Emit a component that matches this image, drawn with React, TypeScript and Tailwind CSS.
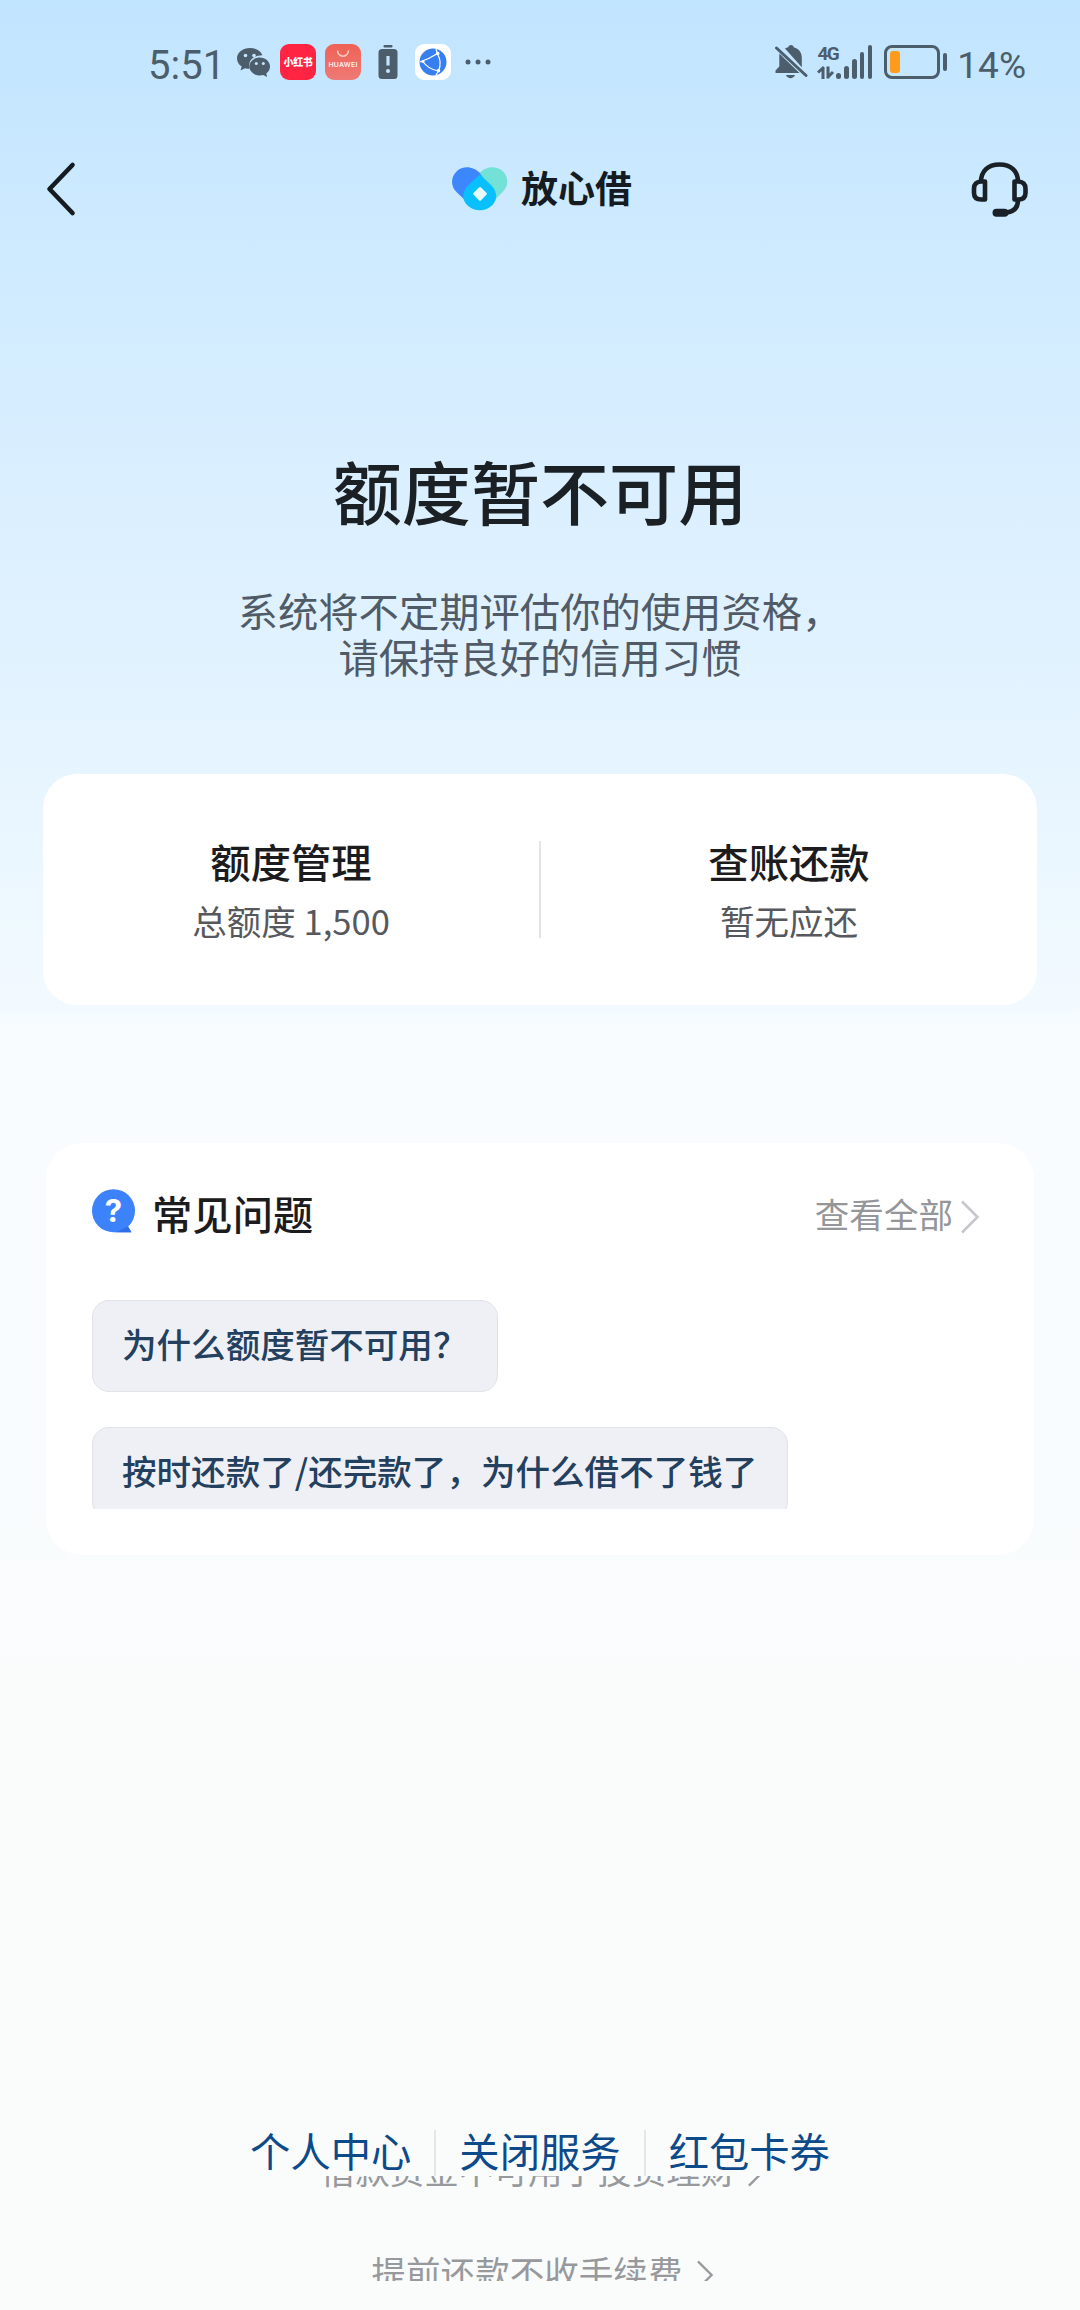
import type { ReactNode } from 'react'

const questions = [
  { id: 1, text: '为什么额度暂不可用？' },
  { id: 2, text: '按时还款了/还完款了，为什么借不了钱了' },
]

const links = ['个人中心', '关闭服务', '红包卡券']

function StatusBar() {
  return (
    <div className="flex h-[124px] items-start justify-between pl-[148px] pr-[54px] pt-[40px] text-[#4c5d6b]">
      <div className="flex h-[44px] items-center">
        <span className="w-[89px] pt-[7px] font-[Roboto] text-[40px] leading-[44px]">5:51</span>

        <svg width="34" height="34" viewBox="0 0 34 34" fill="currentColor">
          <path d="M13 3C5.800 3 0 7.600 0 13.500c0 3.300 1.800 6.100 4.700 8l-1.200 4 4.500-2.300c1.600.4 3.300.7 4.700.6-2.400-8 4-13.700 12.700-13.600C24 6 19 3 13 3z" />
          <path d="M33 21.500c0-5-4.600-8.900-10.300-8.900s-10.300 4-10.300 8.900 4.600 8.900 10.300 8.900c1.300 0 2.500-.2 3.600-.5l3.900 2-.9-3.400c2.300-1.700 3.700-4.200 3.700-7z" />
          <circle cx="8.500" cy="10.500" r="1.800" fill="#c4e5ff" />
          <circle cx="17" cy="10.500" r="1.800" fill="#c4e5ff" />
          <circle cx="19.300" cy="18.500" r="1.500" fill="#c4e5ff" />
          <circle cx="26.300" cy="18.500" r="1.500" fill="#c4e5ff" />
        </svg>

        <div className="ml-[9px] flex h-[36px] w-[36px] items-center justify-center rounded-[9px] bg-[#fe2442]">
          <span className="whitespace-nowrap text-[10px] font-black leading-none tracking-[-0.3px] text-white">小红书</span>
        </div>

        <div className="ml-[9px] flex h-[36px] w-[36px] flex-col items-center rounded-[9px] bg-linear-to-b from-[#ef6155] to-[#ee7a76]">
          <svg className="mt-[6px]" width="14" height="8" viewBox="0 0 14 8" fill="none" stroke="#fbcfc8" strokeWidth="1.500">
            <path d="M1.500 0.500a5.500 5.800 0 0 0 11 0" />
          </svg>
          <span className="mt-[3px] font-[Inter] text-[6.8px] font-semibold leading-[8px] tracking-[0.3px] text-[#fff0ee]">HUAWEI</span>
        </div>

        <svg className="ml-[17px]" width="20" height="36" viewBox="0 0 20 36" fill="none">
          <rect x="5.500" y="1" width="9" height="2.500" rx="1" fill="#4c5d6b" />
          <rect x="0.500" y="5" width="19" height="30" rx="3.500" fill="#4c5d6b" />
          <path d="M10 12v9.500" stroke="#c4e5ff" strokeWidth="3.200" />
          <circle cx="10" cy="27" r="2" fill="#c4e5ff" />
        </svg>

        <div className="ml-[17px] flex h-[36px] w-[36px] items-center justify-center rounded-[9px] bg-white">
          <svg width="28" height="28" viewBox="0 0 28 28" fill="none">
            <circle cx="14" cy="14" r="13.500" fill="#377ff0" />
            <path d="M1 14C7 12 13 9 18.500 5.500M3 12.500c3.500 5 9.500 9.500 16.500 10.500M18.500 6c3 5 3.500 11 1 17M19.500 23 17 27M18.500 5.500 17 1" stroke="#fff" strokeWidth="1.200" />
            <circle cx="18.700" cy="5.500" r="1.800" fill="#fff" />
            <circle cx="4" cy="13.500" r="1.500" fill="#fff" />
            <circle cx="19.500" cy="22.700" r="1.800" fill="#fff" />
          </svg>
        </div>

        <svg className="ml-[14px]" width="28" height="6" viewBox="0 0 28 6" fill="currentColor">
          <circle cx="3" cy="3" r="2.500" />
          <circle cx="13" cy="3" r="2.500" />
          <circle cx="23" cy="3" r="2.500" />
        </svg>
      </div>

      <div className="flex h-[44px] items-center">
        <svg width="34" height="36" viewBox="0 0 34 36" fill="currentColor">
          <path d="M11 4.500c1-.6 2-1 3.200-1.300.8-3 4.800-3 5.600 0 5 1.400 8 5.300 8 10.500v9.500z" />
          <path d="M5.300 9.500 25.500 29H1.500v-2.500l3.800-4z" />
          <path d="M12 31h9c-1.500 4.200-7.500 4.200-9 0z" />
          <path d="m2.500 4 29.500 27.500" fill="none" stroke="currentColor" strokeWidth="3" strokeLinecap="round" />
        </svg>

        <div className="ml-[9px] flex flex-col">
          <span className="h-[17px] font-[Roboto] text-[19px] font-bold leading-[17px] tracking-[-1.500px]">4G</span>
          <svg className="mt-[3px]" width="19" height="15" viewBox="0 0 19 15" fill="none" stroke="currentColor" strokeWidth="3">
            <path d="M6 14V2.500M7 2 1 7.500" />
            <path d="M11 1.500V13.500M10.500 12.500 16 7" />
          </svg>
        </div>
        <div className="-ml-[2px] flex h-[34px] items-end gap-[3.400px]">
          <i className="h-[6px] w-[4.500px] rounded-full bg-[#4c5d6b]" />
          <i className="h-[13px] w-[4.500px] rounded-full bg-[#4c5d6b]" />
          <i className="h-[20px] w-[4.500px] rounded-full bg-[#4c5d6b]" />
          <i className="h-[27px] w-[4.500px] rounded-full bg-[#4c5d6b]" />
          <i className="h-[34px] w-[4.500px] rounded-full bg-[#4c5d6b]" />
        </div>

        <div className="ml-[12px] flex h-[34px] w-[56px] items-center rounded-[8px] border-3 border-[#4c5d6b] pl-[3px]">
          <div className="h-[22px] w-[10px] rounded-[3px] bg-[#ff9a1a]" />
        </div>
        <div className="ml-[3px] h-[18px] w-[4px] rounded-full bg-[#4c5d6b]" />
        <span className="ml-[10px] pt-[7px] font-[Roboto] text-[37px] leading-[44px]">14%</span>
      </div>
    </div>
  )
}

function Header() {
  return (
    <header className="flex h-[130px] items-center justify-between pl-[44px] pr-[50px]">
      <svg width="34" height="60" viewBox="0 0 34 60" fill="none" stroke="#151b20" strokeWidth="4.600" strokeLinecap="round" strokeLinejoin="round">
        <path d="M28.500 6 5.500 30l23 24" />
      </svg>

      <div className="flex items-center pl-[36px]">
        <svg width="56" height="46" viewBox="0 0 56 46">
          <path d="M27 8C33 0 44-.5 50.500 5c6 5.500 6.500 14 1 20L38 39 20 20z" fill="#73e1d6" />
          <path d="M28.500 8C22 0 11-.5 5 5c-6.500 6-6.500 15-.5 21L18 39l18-19z" fill="#3c87fe" />
          <path d="M28 8.500 39.500 19.500c6 6.500 6 14 1 19.500-7 7-18.500 7-25.500 0-5.500-6-5-13 1-19.500z" fill="#08c0fe" />
          <rect x="22.800" y="22.500" width="10.500" height="10.500" rx="1.500" fill="#e8f8ff" transform="rotate(45 28 27.750)" />
        </svg>
        <span className="-mt-[4px] ml-[13px] text-[37px] font-bold leading-[44px] text-[#141c22]">放心借</span>
      </div>

      <svg width="60" height="58" viewBox="0 0 60 58" fill="none" stroke="#192127" strokeWidth="4.600">
        <path d="M11 22C11 11 18 4.500 29.500 4.500S48 11 48 22" />
        <path d="M15 21.500h-3.500c-5 0-7.500 3-7.500 7v4.500c0 4 2.500 6.500 7.500 6.500H15z" strokeLinejoin="round" />
        <path d="M44.500 21.500H48c5 0 7.500 3 7.500 7v4.500c0 4-2.500 6.500-7.500 6.500h-3.500z" strokeLinejoin="round" />
        <path d="M48 40c0 7-4 11.500-11 12.500" />
        <path d="M26.500 52.800H34.500" strokeWidth="8" strokeLinecap="round" />
      </svg>
    </header>
  )
}

function SummaryItem({ title, children }: { title: string; children: ReactNode }) {
  return (
    <div className="flex flex-1 flex-col items-center">
      <h2 className="text-[40.32px] font-medium leading-[46px] text-[#1c1c1e]">{title}</h2>
      <p className="mt-[16px] text-[34.56px] leading-[40px] text-[#56585e]">{children}</p>
    </div>
  )
}

function Chevron({ className, color }: { className: string; color: string }) {
  return (
    <svg className={className} width="20" height="34" viewBox="0 0 20 34" fill="none" stroke={color} strokeWidth="2.600">
      <path d="M2 1.500 17.500 17 2 32.500" />
    </svg>
  )
}

export default function App() {
  return (
    <div className="flex h-[2310px] w-[1080px] flex-col overflow-hidden bg-[linear-gradient(180deg,#c1e4ff_0px,#cbe9ff_190px,#d8eeff_440px,#e3f3ff_700px,#f2faff_1000px,#f8fcff_1030px,#f8fcff_1300px,#fafcfc_1700px,#fafcfc_2310px)] font-['Noto_Sans_CJK_SC',sans-serif]">
      <StatusBar />
      <Header />

      <section className="mt-[196px] flex flex-col items-center">
        <h1 className="text-[69.12px] font-medium leading-[80px] text-[#1b2024]">额度暂不可用</h1>
        <p className="mt-[57px] whitespace-nowrap text-center text-[40.32px] leading-[46px] text-[#505b67]">
          系统将不定期评估你的使用资格，
          <br />
          请保持良好的信用习惯
        </p>
      </section>

      <section className="mx-[43px] mt-[95px] flex h-[231px] shrink-0 items-start rounded-[34px] bg-white pt-[64px]">
        <SummaryItem title="额度管理">总额度 1,500</SummaryItem>
        <div className="mt-[3px] h-[97px] w-[2px] bg-[#e3e4e8]" />
        <SummaryItem title="查账还款">暂无应还</SummaryItem>
      </section>

      <section className="mx-[46px] mt-[138px] h-[412px] shrink-0 rounded-[36px] bg-white px-[46px] pt-[45px]">
        <div className="flex h-[54px] items-center">
          <svg className="-mt-[8px]" width="44" height="44" viewBox="0 0 44 44">
            <path d="M22 43.200h17.500l-4-6.500z" fill="#2c6be6" />
            <circle cx="21.500" cy="21.700" r="21.500" fill="#3b82fb" />
            <path d="M36 37.500 39.300 43.200H24z" fill="#2e6ee8" />
            <text x="21.500" y="33" textAnchor="middle" fill="#fff" fontSize="31" fontWeight="700" fontFamily="Inter">?</text>
          </svg>
          <h2 className="-mt-[4px] ml-[16px] text-[40.32px] font-medium leading-[46px] text-[#1c1c1e]">常见问题</h2>
          <span className="-mt-[4px] ml-auto text-[34.56px] leading-[46px] text-[#95969a]">查看全部</span>
          <Chevron className="ml-[7px] mr-[8px] mt-[3px]" color="#c5c7cc" />
        </div>

        <div className="mt-[58px] flex h-[209px] flex-col items-start gap-[35px] overflow-hidden">
          {questions.map((q) => (
            <div
              key={q.id}
              className="flex h-[92px] shrink-0 items-center whitespace-nowrap rounded-[17px] border border-[#e1e3e8] bg-[#eff0f5] pb-[6px] pl-[29px] pr-[30px] text-[34.56px] font-medium leading-[46px] text-[#23405f]"
            >
              {q.text}
            </div>
          ))}
        </div>
      </section>

      <footer className="mt-[575px] flex flex-col items-center">
        <nav className="flex h-[46px] items-center">
          {links.map((link, i) => (
            <div key={link} className="flex items-center">
              {i > 0 && <div className="mx-[23px] h-[46px] w-[2px] bg-[#e4e7e9]" />}
              <a className="-mt-[7px] text-[40.32px] leading-[46px] text-[#0c4a8a]">{link}</a>
            </div>
          ))}
        </nav>

        {/* only a strip of each notice shows under the nav */}
        <div className="flex h-[12px] items-end overflow-hidden pl-[6px] text-[34.56px] leading-[40px] text-[#97999d]">
          <span className="-mb-[1px]">借款资金不可用于投资理财</span>
          <Chevron className="mb-[1px] ml-[12px] h-[30px] w-[18px]" color="#97999d" />
        </div>
        <div className="mt-[65px] flex h-[28px] items-start overflow-hidden pl-[6px] text-[34.56px] leading-[40px] text-[#97999d]">
          <span className="-mt-[2px]">提前还款不收手续费</span>
          <Chevron className="ml-[14px] mt-[7px] h-[30px] w-[18px] shrink-0" color="#97999d" />
        </div>
      </footer>
    </div>
  )
}
